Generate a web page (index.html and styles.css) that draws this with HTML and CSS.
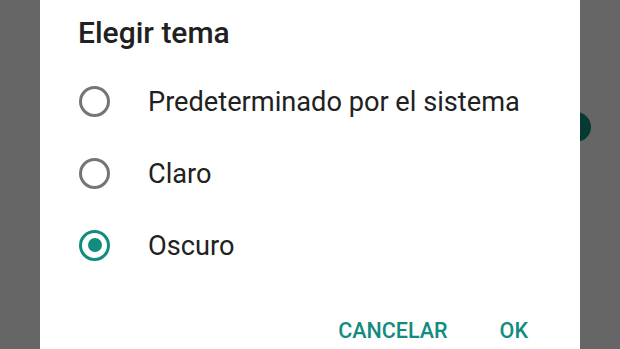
FILE: index.html
```html
<!DOCTYPE html>
<html lang="es">
<head>
    <meta charset="UTF-8">
    <title>Elegir tema</title>
    <link rel="stylesheet" href="styles.css">
</head>
<body>
    <div class="screen">
        <div class="fab"></div>
        <div class="dialog">
            <h2 class="title">Elegir tema</h2>
            <div class="options">
                <label class="option">
                    <span class="radio"></span>
                    <span class="option-text">Predeterminado por el sistema</span>
                </label>
                <label class="option">
                    <span class="radio"></span>
                    <span class="option-text">Claro</span>
                </label>
                <label class="option">
                    <span class="radio checked"></span>
                    <span class="option-text">Oscuro</span>
                </label>
            </div>
            <div class="actions">
                <button class="action">CANCELAR</button>
                <button class="action">OK</button>
            </div>
        </div>
    </div>
</body>
</html>
```

FILE: styles.css
```css
html, body {
    margin: 0;
    height: 100%;
}

body {
    font-family: Roboto, "Noto Sans", sans-serif;
    background-color: #666666;
    overflow: hidden;
}

.screen {
    position: relative;
    height: 100%;
}

/* boton flotante detras del dialogo */
.fab {
    position: absolute;
    left: 561px;
    top: 112px;
    width: 30px;
    height: 30px;
    border-radius: 50%;
    background-color: #053a32;
}

.dialog {
    position: relative;
    margin-left: 40px;
    width: 540px;
    height: 100%;
    background-color: #fff;
    box-sizing: border-box;
    padding: 17px 52px 0 38px;
}

.title {
    margin: 0 0 16px 0;
    font-size: 30px;
    line-height: 32px;
    font-weight: 500;
    color: #212121;
}

.options {
    display: flex;
    flex-direction: column;
}

.option {
    display: flex;
    align-items: center;
    height: 72px;
}

.radio {
    width: 31px;
    height: 31px;
    margin-left: 1px;
    margin-right: 38px;
    box-sizing: border-box;
    border: 3px solid #757575;
    border-radius: 50%;
    display: flex;
    align-items: center;
    justify-content: center;
}

.radio.checked {
    border-color: #128c7e;
}

.radio.checked::after {
    content: "";
    width: 14px;
    height: 14px;
    border-radius: 50%;
    background-color: #128c7e;
}

.option-text {
    font-size: 27.2px;
    line-height: 1;
    padding-top: 3px;
    color: #212121;
}

.actions {
    display: flex;
    justify-content: flex-end;
    gap: 52px;
    margin-top: 32px;
}

.action {
    font-family: Roboto, "Noto Sans", sans-serif;
    font-size: 21.5px;
    font-weight: 500;
    line-height: 36px;
    padding: 0;
    border: none;
    background: none;
    color: #128c7e;
}
```
